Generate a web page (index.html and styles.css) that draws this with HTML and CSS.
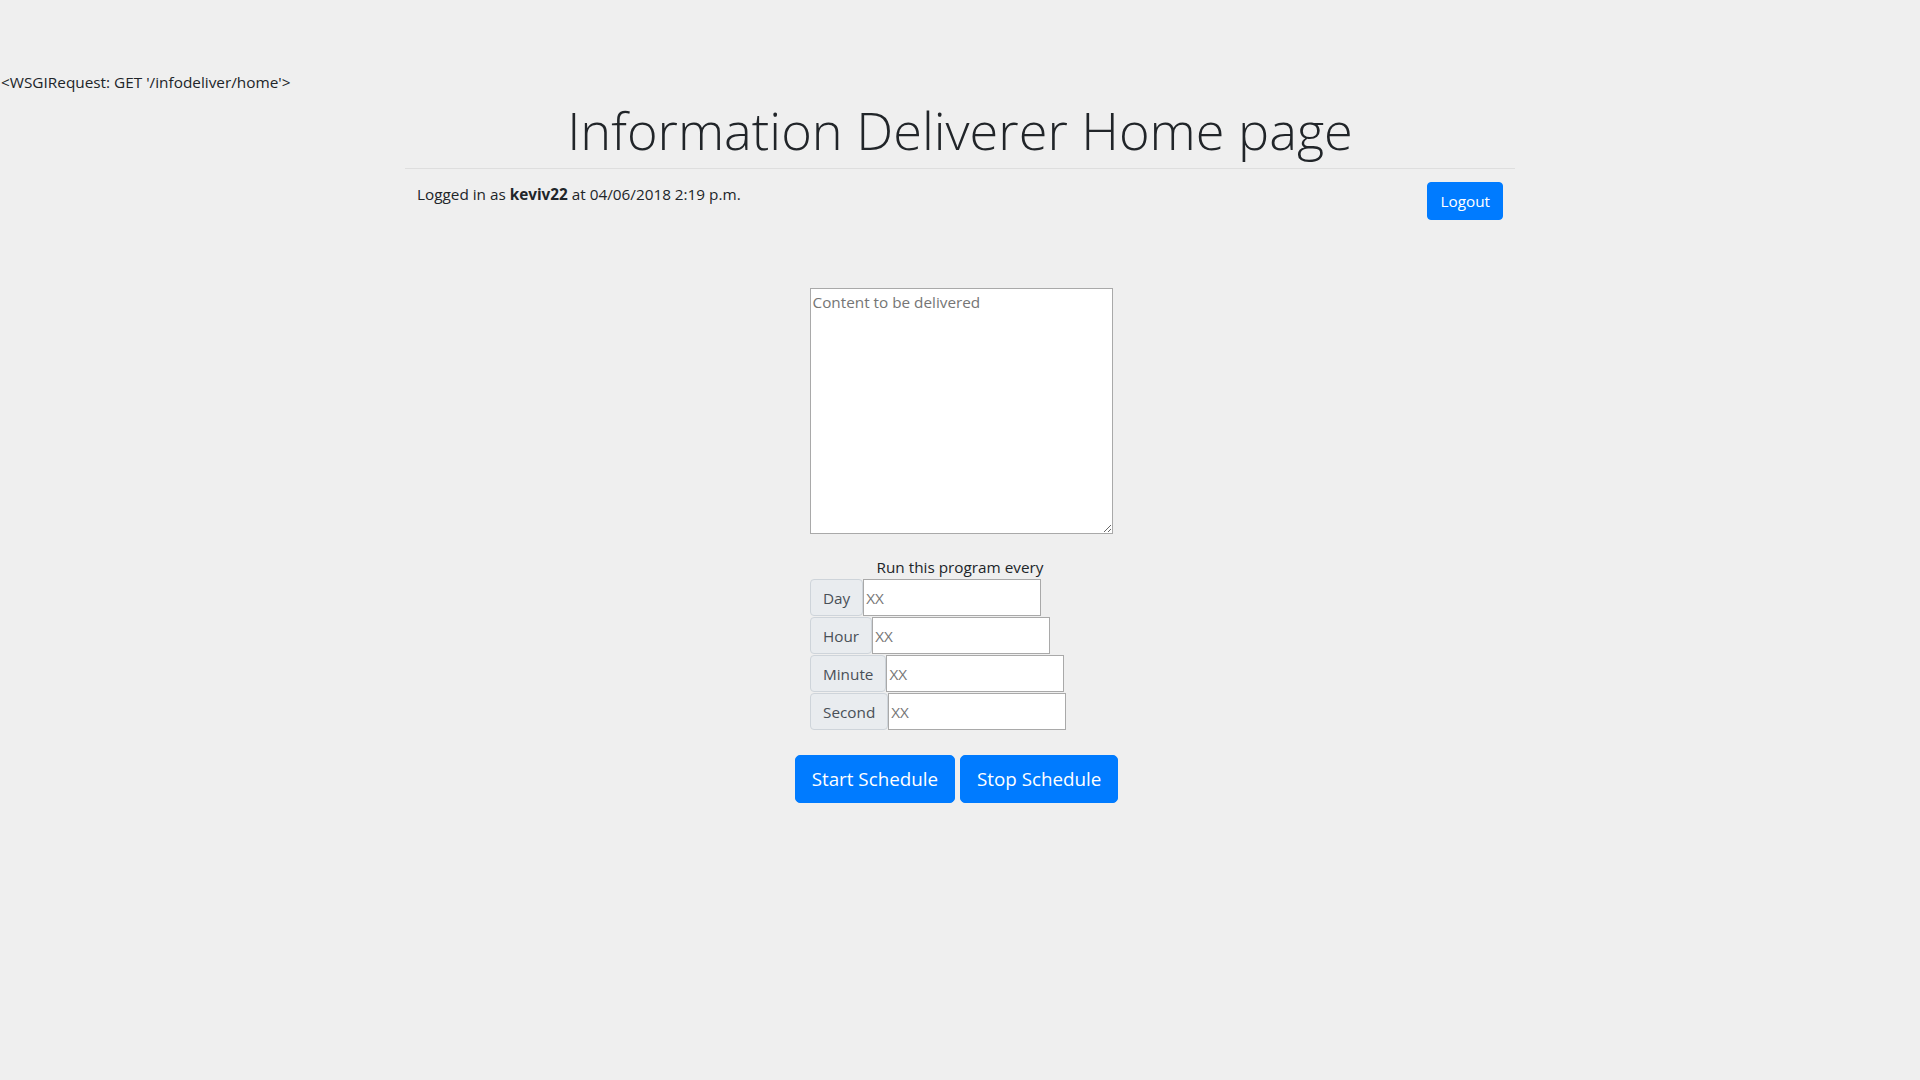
FILE: index.html
```html
<!DOCTYPE html>
<html lang="en">
<head>
<meta charset="utf-8">
<title>Information Deliverer Home page</title>
<link rel="stylesheet" href="styles.css">
</head>
<body>
<p class="request">&lt;WSGIRequest: GET '/infodeliver/home'&gt;</p>
<div class="container">
  <h1 class="title">Information Deliverer Home page</h1>
  <hr class="divider">
  <div class="userbar">
    <p class="logged">Logged in as <b>keviv22</b> at 04/06/2018 2:19 p.m.</p>
    <button class="btn btn-primary" type="button">Logout</button>
  </div>
  <form class="schedule-form">
    <textarea class="content" placeholder="Content to be delivered"></textarea>
    <p class="run-label">Run this program every</p>
    <div class="groups">
      <div class="input-group"><span class="input-group-text">Day</span><input class="field" type="text" placeholder="XX"></div>
      <div class="input-group"><span class="input-group-text">Hour</span><input class="field" type="text" placeholder="XX"></div>
      <div class="input-group"><span class="input-group-text">Minute</span><input class="field" type="text" placeholder="XX"></div>
      <div class="input-group"><span class="input-group-text">Second</span><input class="field" type="text" placeholder="XX"></div>
    </div>
    <div class="actions">
      <button class="btn btn-primary btn-lg" type="button">Start Schedule</button>
      <button class="btn btn-primary btn-lg" type="button">Stop Schedule</button>
    </div>
  </form>
</div>
</body>
</html>
```
FILE: styles.css
```css
html, body {
  margin: 0;
  padding: 0;
}
body {
  background: #efefef;
  color: #212529;
  font-family: "Open Sans", "Noto Sans", sans-serif;
  font-size: 15.3px;
  line-height: 24px;
}
.request {
  margin: 70px 0 0 0;
  padding-left: 1px;
  font-size: 15.35px;
}
.container {
  width: 1110px;
  margin: 0 auto;
  padding: 0 15px;
}
.title {
  margin: 0;
  padding-top: 1px;
  text-align: center;
  font-weight: 300;
  font-size: 52.3px;
  line-height: 70px;
  color: #212529;
}
.divider {
  margin: 0;
  margin-top: 3px;
  border: 0;
  border-top: 1px solid #dedede;
}
.userbar {
  display: flex;
  justify-content: space-between;
  align-items: flex-start;
  padding: 13px 12px 0 12px;
}
.logged {
  margin: 0;
}
.logged b {
  font-weight: 700;
}
.btn {
  font-family: inherit;
  font-size: 15.3px;
  line-height: 24px;
  padding: 6px 12px;
  border: 1px solid #007bff;
  border-radius: 4px;
  background: #007bff;
  color: #fff;
  cursor: pointer;
}
.btn-lg {
  font-size: 18.8px;
  line-height: 30px;
  padding: 8px 16px;
  border-radius: 5px;
}
.schedule-form {
  display: flex;
  flex-direction: column;
  align-items: center;
  margin-top: 68px;
}
.content {
  display: block;
  box-sizing: border-box;
  width: 303px;
  height: 246px;
  margin: 0 0 0 2px;
  padding: 3px 2px;
  border: 1px solid #a9a9a9;
  background: #fff;
  font-family: inherit;
  font-size: 15.3px;
  line-height: 20px;
  color: #212529;
}
.content::placeholder,
.field::placeholder {
  color: #757575;
}
.run-label {
  margin: 21px 0 0 0;
}
.groups {
  width: 303px;
  margin-left: 3px;
  display: flex;
  flex-direction: column;
  gap: 1px;
}
.input-group {
  display: flex;
  height: 37px;
}
.input-group-text {
  box-sizing: border-box;
  display: flex;
  align-items: center;
  height: 37px;
  padding: 0 12px;
  border: 1px solid #ced4da;
  border-radius: 4px;
  background: #e9ecef;
  color: #495057;
  font-size: 15.3px;
}
.field {
  box-sizing: border-box;
  width: 178px;
  height: 37px;
  margin: 0;
  padding: 1px 2px;
  border: 1px solid #a9a9a9;
  background: #fff;
  font-family: inherit;
  font-size: 15.3px;
  color: #212529;
}
.actions {
  display: flex;
  gap: 5px;
  margin-top: 25px;
  margin-right: 7px;
}
```
